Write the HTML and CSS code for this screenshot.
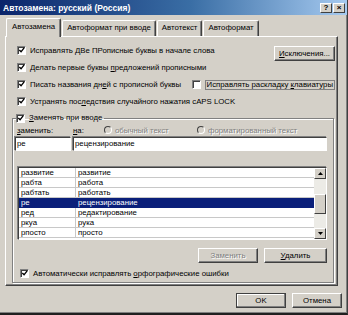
FILE: index.html
```html
<!DOCTYPE html>
<html lang="ru">
<head>
    <meta charset="UTF-8">
    <meta name="viewport" content="width=device-width, initial-scale=1.0">
    <title>Автозамена</title>
    <link rel="stylesheet" href="styles.css">
</head>
<body>
    <div class="window">
        <div class="titlebar">
            <span class="title">Автозамена: русский (Россия)</span>
            <div class="tb-buttons">
                <span class="tb-btn">?</span>
                <span class="tb-btn">&#215;</span>
            </div>
        </div>

        <div class="tabs">
            <div class="tab active">Автозамена</div>
            <div class="tab">Автоформат при вводе</div>
            <div class="tab">Автотекст</div>
            <div class="tab">Автоформат</div>
        </div>

        <div class="panel">
            <div class="row split">
                <label class="check"><span class="box checked"><svg viewBox="0 0 8 8"><path d="M1.5 3.5l2 2 3.5-4.5" /></svg></span><span>Исправлять <u>Д</u>Ве ПРописные буквы в начале слова</span></label>
                <button class="btn exc"><u>И</u>сключения...</button>
            </div>
            <div class="row">
                <label class="check"><span class="box checked"><svg viewBox="0 0 8 8"><path d="M1.5 3.5l2 2 3.5-4.5" /></svg></span><span>Делать первые буквы <u>п</u>редложений прописными</span></label>
            </div>
            <div class="row split">
                <label class="check"><span class="box checked"><svg viewBox="0 0 8 8"><path d="M1.5 3.5l2 2 3.5-4.5" /></svg></span><span>Писать названия дн<u>е</u>й с прописной буквы</span></label>
                <label class="check"><span class="box"></span><span class="focus">Исправлять раскладку <u>к</u>лавиатуры</span></label>
            </div>
            <div class="row">
                <label class="check"><span class="box checked"><svg viewBox="0 0 8 8"><path d="M1.5 3.5l2 2 3.5-4.5" /></svg></span><span>Устранять пос<u>л</u>едствия случайного нажатия cAPS LOCK</span></label>
            </div>

            <fieldset class="group">
                <legend><label class="check"><span class="box checked"><svg viewBox="0 0 8 8"><path d="M1.5 3.5l2 2 3.5-4.5" /></svg></span><span><u>З</u>аменять при вводе</span></label></legend>

                <div class="labels">
                    <span class="lbl-from"><u>з</u>аменить:</span>
                    <span class="lbl-to"><u>н</u>а:</span>
                    <span class="radio-item plain"><span class="radio"></span><span>обычный текст</span></span>
                    <span class="radio-item"><span class="radio"></span><span>форматированный текст</span></span>
                </div>

                <div class="inputs">
                    <div class="field from">ре</div>
                    <div class="field to">рецензирование</div>
                </div>

                <div class="list">
                    <div class="rows">
                        <div class="item"><span class="c1">развитие</span><span class="c2">развитие</span></div>
                        <div class="item"><span class="c1">рабта</span><span class="c2">работа</span></div>
                        <div class="item"><span class="c1">рабтать</span><span class="c2">работать</span></div>
                        <div class="item selected"><span class="c1">ре</span><span class="c2">рецензирование</span></div>
                        <div class="item"><span class="c1">ред</span><span class="c2">редактирование</span></div>
                        <div class="item"><span class="c1">ркуа</span><span class="c2">рука</span></div>
                        <div class="item"><span class="c1">рпосто</span><span class="c2">просто</span></div>
                    </div>
                    <div class="scrollbar">
                        <span class="sb-btn"><svg viewBox="0 0 7 4"><path d="M3.5 0L7 4H0z" /></svg></span>
                        <span class="sb-track"><span class="sb-thumb"></span></span>
                        <span class="sb-btn"><svg viewBox="0 0 7 4"><path d="M0 0h7L3.5 4z" /></svg></span>
                    </div>
                </div>

                <div class="actions">
                    <button class="btn disabled">Заменить</button>
                    <button class="btn"><u>У</u>далить</button>
                </div>

                <label class="check auto"><span class="box checked"><svg viewBox="0 0 8 8"><path d="M1.5 3.5l2 2 3.5-4.5" /></svg></span><span>Автоматически исправлять <u>о</u>рфографические ошибки</span></label>
            </fieldset>
        </div>

        <div class="footer">
            <button class="btn ok">OK</button>
            <button class="btn">Отмена</button>
        </div>
    </div>
</body>
</html>
```

FILE: styles.css
```css
body {
    margin: 0;
    padding: 0;
    font-family: "Liberation Sans", Arial, sans-serif;
    font-size: 7.8px;
    color: #000;
    background-color: #d4d0c8;
}
.window {
    width: 348px;
    height: 315px;
    box-sizing: border-box;
    background-color: #d4d0c8;
    border-right: 1px solid #404040;
    border-bottom: 2px solid #202020;
    box-shadow: inset -1px -1px 0 #808080;
    overflow: hidden;
}
.titlebar {
    height: 15px;
    display: flex;
    align-items: center;
    justify-content: space-between;
    padding: 0 2px 0 3px;
    background: linear-gradient(to right, #0a246a, #3a6ea5 55%, #a6caf0);
    color: #fff;
    font-weight: bold;
    font-size: 8.5px;
}
.tb-buttons {
    display: flex;
    gap: 1px;
}
.tb-btn {
    width: 12px;
    height: 10px;
    box-sizing: border-box;
    background-color: #d4d0c8;
    border: 1px solid;
    border-color: #fff #404040 #404040 #fff;
    color: #000;
    font-size: 8px;
    line-height: 8px;
    text-align: center;
}
.tabs {
    display: flex;
    align-items: flex-end;
    height: 18px;
    margin-top: 3px;
    padding-left: 6px;
}
.tab {
    height: 16px;
    box-sizing: border-box;
    padding: 0 4px;
    line-height: 14px;
    border-top: 1px solid #fff;
    border-left: 1px solid #fff;
    border-right: 1px solid #404040;
    border-radius: 2px 2px 0 0;
    box-shadow: inset -1px 0 #808080;
}
.tab.active {
    height: 19px;
    margin-bottom: -1px;
    position: relative;
    z-index: 1;
    padding: 0 5px 0 5px;
    line-height: 16px;
    background-color: #d4d0c8;
}
.tab + .tab {
    margin-left: 1px;
}
.panel {
    height: 250px;
    box-sizing: border-box;
    margin: 0 9px 0 5px;
    border: 1px solid;
    border-color: #fff #404040 #404040 #fff;
    box-shadow: inset -1px -1px #808080;
    padding-top: 5px;
}
.row {
    height: 17px;
    display: flex;
    align-items: center;
    padding-left: 11px;
}
.row.split {
    justify-content: space-between;
    padding-right: 2px;
}
.check {
    display: flex;
    align-items: center;
    white-space: nowrap;
}
.box {
    width: 9px;
    height: 9px;
    box-sizing: border-box;
    margin-right: 4px;
    background-color: #fff;
    border: 1px solid;
    border-color: #808080 #fff #fff #808080;
    box-shadow: inset 1px 1px #404040;
    display: flex;
    flex-shrink: 0;
}
.box svg {
    width: 7px;
    height: 7px;
}
.box path {
    fill: none;
    stroke: #000;
    stroke-width: 1.6;
}
.focus {
    border: 1px solid #808080;
    padding: 0 1px;
    line-height: 8px;
}
.btn {
    font-family: inherit;
    font-size: 7.8px;
    height: 15px;
    padding: 0;
    background-color: #d4d0c8;
    border: 1px solid;
    border-color: #fff #404040 #404040 #fff;
    box-shadow: inset -1px -1px #808080;
    color: #000;
}
.btn.exc {
    width: 61px;
    align-self: flex-end;
    margin-bottom: -2px;
}
.btn.disabled {
    color: #808080;
    text-shadow: 1px 1px #fff;
}
.group {
    margin: 2px 3px 0 6px;
    padding: 0 6px 3px 2px;
    border: 1px solid #808080;
    box-shadow: 1px 1px 0 #fff, inset 1px 1px 0 #fff;
}
.group legend {
    margin-left: 1px;
    padding: 0 2px 0 0;
    line-height: 12px;
}
.labels {
    display: flex;
    align-items: center;
    height: 10px;
    margin-top: 1px;
    padding-left: 2px;
}
.lbl-from {
    width: 56px;
}
.lbl-to {
    width: 31px;
}
.radio-item {
    display: flex;
    align-items: center;
    color: #808080;
    text-shadow: 1px 1px #fff;
}
.radio-item.plain {
    width: 93px;
}
.radio {
    width: 8px;
    height: 8px;
    box-sizing: border-box;
    border-radius: 50%;
    border: 1px solid;
    border-color: #404040 #fff #fff #404040;
    background-color: #d4d0c8;
    margin-right: 3px;
}
.inputs {
    display: flex;
    gap: 2px;
    margin-top: 2px;
}
.field {
    height: 14px;
    box-sizing: border-box;
    background-color: #fff;
    border: 1px solid;
    border-color: #404040 #fff #fff #404040;
    box-shadow: -1px -1px 0 #808080;
    padding-left: 1px;
    line-height: 12px;
}
.field.from {
    width: 56px;
}
.field.to {
    flex: 1;
}
.list {
    display: flex;
    margin: 16px 0 0 3px;
    height: 73px;
    box-sizing: border-box;
    background-color: #fff;
    border: 1px solid;
    border-color: #404040 #fff #fff #404040;
    box-shadow: -1px -1px 0 #808080;
}
.rows {
    flex: 1;
}
.item {
    display: flex;
    height: 10px;
    box-sizing: border-box;
    border-bottom: 1px solid #c8c8c8;
    line-height: 9px;
}
.item .c1 {
    width: 54px;
    padding-left: 2px;
    border-right: 1px solid #c8c8c8;
}
.item .c2 {
    padding-left: 2px;
}
.item.selected {
    background-color: #0a1f7a;
    color: #fff;
    border-bottom-color: #0a1f7a;
}
.item.selected .c1 {
    border-right-color: #0a1f7a;
}
.scrollbar {
    width: 12px;
    display: flex;
    flex-direction: column;
}
.sb-btn {
    height: 11px;
    box-sizing: border-box;
    background-color: #d4d0c8;
    border: 1px solid;
    border-color: #fff #404040 #404040 #fff;
    display: flex;
    align-items: center;
    justify-content: center;
}
.sb-btn svg {
    width: 5px;
    height: 3px;
}
.sb-track {
    flex: 1;
    background-color: #ecebe6;
    display: flex;
    flex-direction: column;
    justify-content: flex-end;
}
.sb-thumb {
    height: 20px;
    margin-bottom: 14px;
    box-sizing: border-box;
    background-color: #d4d0c8;
    border: 1px solid;
    border-color: #fff #404040 #404040 #fff;
}
.actions {
    display: flex;
    justify-content: flex-end;
    gap: 6px;
    margin-top: 8px;
}
.actions .btn {
    width: 60px;
}
.actions .btn + .btn {
    width: 63px;
}
.check.auto {
    margin: 4px 0 0 5px;
    height: 12px;
}
.footer {
    display: flex;
    justify-content: flex-end;
    gap: 6px;
    margin-top: 7px;
    padding-right: 5px;
}
.footer .btn {
    width: 50px;
}
.footer .btn.ok {
    border-color: #404040;
    box-shadow: inset -1px -1px #808080, inset 1px 1px #fff;
}
```
